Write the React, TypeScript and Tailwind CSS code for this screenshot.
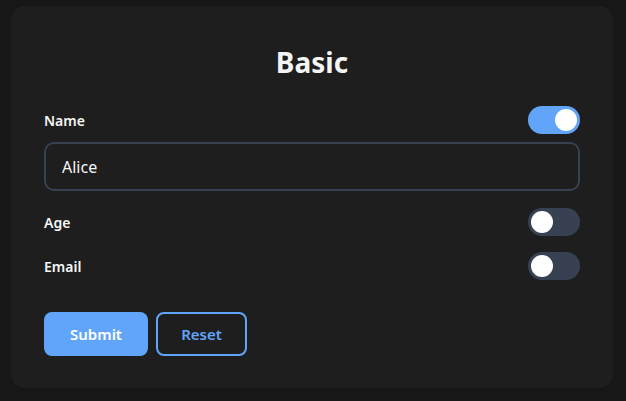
import { useState } from 'react';

function Toggle({ on, onChange }: { on: boolean; onChange: () => void }) {
  return (
    <button
      type="button"
      onClick={onChange}
      className={`relative h-[28px] w-[52px] rounded-full transition-colors ${on ? 'bg-[#60a5fa]' : 'bg-[#374151]'}`}
    >
      <span
        className={`absolute top-[3px] h-[22px] w-[22px] rounded-full bg-white transition-all ${on ? 'left-[27px]' : 'left-[3px]'}`}
      />
    </button>
  );
}

export default function App() {
  const [fields, setFields] = useState({ name: true, age: false, email: false });
  const [name, setName] = useState('Alice');

  return (
    <div className="min-h-[401px] w-full bg-[#171717] pl-[11px] pr-[13px] pt-[6px] pb-[13px] font-['Noto_Sans',sans-serif]">
      <div className="rounded-[14px] bg-[#1e1e1e] px-[33px] pt-[36px] pb-[32px]">
        <h1 className="text-center text-[28px] font-bold leading-[40px] text-[#f5f5f5]">Basic</h1>

        <div className="mt-[24px] flex flex-col">
          <div className="flex h-[28px] items-center justify-between">
            <span className="text-[14px] font-semibold text-[#f5f5f5]">Name</span>
            <Toggle on={fields.name} onChange={() => setFields({ ...fields, name: !fields.name })} />
          </div>
          {fields.name && (
            <input
              value={name}
              onChange={(e) => setName(e.target.value)}
              className="mt-[8px] h-[49px] w-full rounded-[10px] border-2 border-[#374151] bg-transparent px-[16px] text-[16px] text-[#f5f5f5] outline-none"
            />
          )}

          <div className="mt-[17px] flex h-[28px] items-center justify-between">
            <span className="text-[14px] font-semibold text-[#f5f5f5]">Age</span>
            <Toggle on={fields.age} onChange={() => setFields({ ...fields, age: !fields.age })} />
          </div>

          <div className="mt-[16px] flex h-[28px] items-center justify-between">
            <span className="text-[14px] font-semibold text-[#f5f5f5]">Email</span>
            <Toggle on={fields.email} onChange={() => setFields({ ...fields, email: !fields.email })} />
          </div>
        </div>

        <div className="mt-[32px] flex gap-[8px]">
          <button className="h-[44px] w-[104px] rounded-[8px] bg-[#60a5fa] text-[15px] font-semibold text-white">
            Submit
          </button>
          <button className="h-[44px] w-[91px] rounded-[8px] border-2 border-[#60a5fa] text-[15px] font-semibold text-[#60a5fa]">
            Reset
          </button>
        </div>
      </div>
    </div>
  );
}
